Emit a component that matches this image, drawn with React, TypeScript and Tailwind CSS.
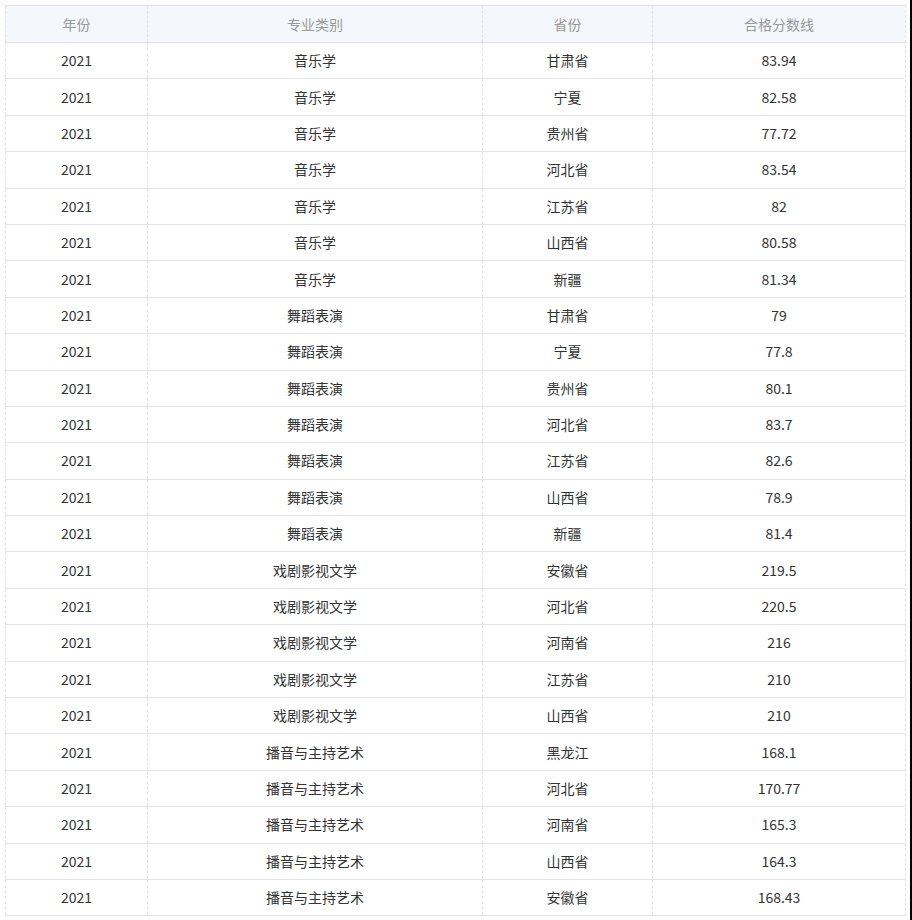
import React from "react";

const rows: [string, string, string][] = [
  ["音乐学", "甘肃省", "83.94"],
  ["音乐学", "宁夏", "82.58"],
  ["音乐学", "贵州省", "77.72"],
  ["音乐学", "河北省", "83.54"],
  ["音乐学", "江苏省", "82"],
  ["音乐学", "山西省", "80.58"],
  ["音乐学", "新疆", "81.34"],
  ["舞蹈表演", "甘肃省", "79"],
  ["舞蹈表演", "宁夏", "77.8"],
  ["舞蹈表演", "贵州省", "80.1"],
  ["舞蹈表演", "河北省", "83.7"],
  ["舞蹈表演", "江苏省", "82.6"],
  ["舞蹈表演", "山西省", "78.9"],
  ["舞蹈表演", "新疆", "81.4"],
  ["戏剧影视文学", "安徽省", "219.5"],
  ["戏剧影视文学", "河北省", "220.5"],
  ["戏剧影视文学", "河南省", "216"],
  ["戏剧影视文学", "江苏省", "210"],
  ["戏剧影视文学", "山西省", "210"],
  ["播音与主持艺术", "黑龙江", "168.1"],
  ["播音与主持艺术", "河北省", "170.77"],
  ["播音与主持艺术", "河南省", "165.3"],
  ["播音与主持艺术", "山西省", "164.3"],
  ["播音与主持艺术", "安徽省", "168.43"],
];

const cell = "flex items-center justify-center border-l border-dashed border-[#e3e3e3]";

export default function App() {
  return (
    <div className="flex w-[912px] h-[920px] bg-white overflow-hidden" style={{ fontFamily: '"Noto Sans CJK SC", "Noto Sans", sans-serif' }}>
      <div className="flex-1 pl-[5px] pt-[5px]">
        <div className="w-[901px] border-r border-dashed border-[#e3e3e3]">
          <div className="grid grid-cols-[142px_335px_170px_253px] h-[38px] bg-[#f4f7fb] border-t border-b border-[#dcdfe3] text-[14px] text-[#999]">
            <div className={cell}>年份</div>
            <div className={cell}>专业类别</div>
            <div className={cell}>省份</div>
            <div className={cell}>合格分数线</div>
          </div>
          {rows.map((r, i) => (
            <div key={i} className="grid grid-cols-[142px_335px_170px_253px] h-[36.4px] border-b border-[#e2e4e7] text-[14px] text-[#333]">
              <div className={cell}>2021</div>
              <div className={cell}>{r[0]}</div>
              <div className={cell}>{r[1]}</div>
              <div className={cell}>{r[2]}</div>
            </div>
          ))}
        </div>
      </div>
      <div className="w-[2px] bg-black" />
    </div>
  );
}
